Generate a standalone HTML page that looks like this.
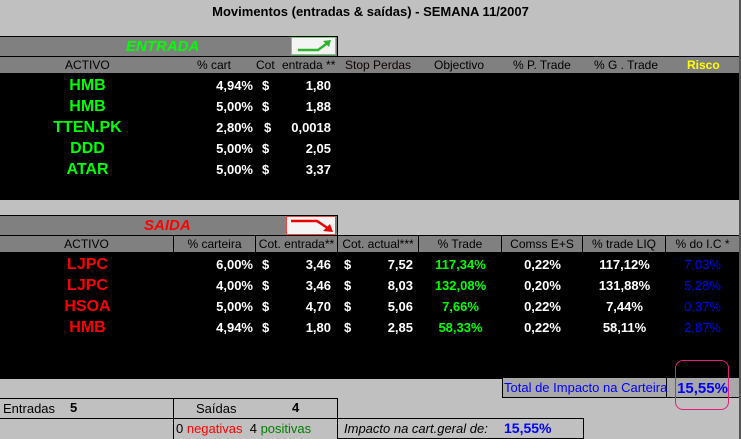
<!DOCTYPE html>
<html><head><meta charset="utf-8"><style>
*{margin:0;padding:0;box-sizing:border-box}
body{width:741px;height:439px;background:#c0c0c0;position:relative;overflow:hidden;font-family:"Liberation Sans",Arial,sans-serif;font-size:12px}
.a{position:absolute;white-space:nowrap}
.b{font-weight:bold}
.r{text-align:right}.c{text-align:center}
.w{color:#fff;font-weight:bold;font-size:13px}
.g{color:#00ff00;font-weight:bold;font-size:16px}
.rd{color:#ff0000;font-weight:bold;font-size:16px}
.hc{position:absolute;top:0;height:16px;border-right:1px solid #000;text-align:center;line-height:16px}
</style></head><body>
<div class="a b" style="left:0;width:741px;top:4px;text-align:center;font-size:13px;color:#000">Movimentos (entradas &amp; saídas) - SEMANA 11/2007</div>
<div class="a" style="right:0;top:0;width:2px;height:439px;background:#555"></div>

<div class="a" style="left:0;top:36px;width:338px;height:21px;background:#808080;border-top:1px solid #000;border-right:1px solid #000"></div>
<div class="a b" style="left:126px;top:38px;color:#00ff00;font-style:italic;font-size:15px">ENTRADA</div>
<div class="a" style="left:291px;top:37px;width:45px;height:18px;background:#f4f4f4;border:1px solid #7c7;">
<svg width="43" height="16"><path d="M6 12 H26 L37 4" stroke="#2db52d" stroke-width="2.5" fill="none"/><path d="M31 3 L39 2 L37 9 Z" fill="#2db52d"/></svg></div>
<div class="a" style="left:0;top:56px;width:739px;height:17px;background:#808080;border-top:1px solid #000"></div>
<div class="a" style="left:65px;top:58px">ACTIVO</div>
<div class="a" style="left:197px;top:58px">% cart</div>
<div class="a" style="left:256px;top:58px">Cot</div>
<div class="a" style="left:282px;top:58px">entrada **</div>
<div class="a" style="left:345px;top:58px;color:#100">Stop Perdas</div>
<div class="a" style="left:434px;top:58px">Objectivo</div>
<div class="a" style="left:513px;top:58px">% P. Trade</div>
<div class="a" style="left:594px;top:58px">% G . Trade</div>
<div class="a b" style="left:687px;top:58px;color:#ffff00">Risco</div>
<div class="a" style="left:0;top:73px;width:739px;height:127px;background:#000"></div>

<div class="a g c" style="left:30px;width:115px;top:77px">HMB</div>
<div class="a g c" style="left:30px;width:115px;top:98px">HMB</div>
<div class="a g c" style="left:30px;width:115px;top:119px">TTEN.PK</div>
<div class="a g c" style="left:30px;width:115px;top:140px">DDD</div>
<div class="a g c" style="left:30px;width:115px;top:161px">ATAR</div>
<div class="a w r" style="left:190px;width:63px;top:78px">4,94%</div>
<div class="a w r" style="left:190px;width:63px;top:99px">5,00%</div>
<div class="a w r" style="left:190px;width:63px;top:120px">2,80%</div>
<div class="a w r" style="left:190px;width:63px;top:141px">5,00%</div>
<div class="a w r" style="left:190px;width:63px;top:162px">5,00%</div>
<div class="a w" style="left:262px;top:78px">$</div>
<div class="a w" style="left:262px;top:99px">$</div>
<div class="a w" style="left:264px;top:120px">$</div>
<div class="a w" style="left:262px;top:141px">$</div>
<div class="a w" style="left:262px;top:162px">$</div>
<div class="a w r" style="left:270px;width:61px;top:78px">1,80</div>
<div class="a w r" style="left:270px;width:61px;top:99px">1,88</div>
<div class="a w r" style="left:270px;width:61px;top:120px">0,0018</div>
<div class="a w r" style="left:270px;width:61px;top:141px">2,05</div>
<div class="a w r" style="left:270px;width:61px;top:162px">3,37</div>

<div class="a" style="left:0;top:215px;width:338px;height:21px;background:#808080;border-top:1px solid #000;border-right:1px solid #000"></div>
<div class="a b" style="left:144px;top:217px;color:#ff0000;font-style:italic;font-size:15px">SAIDA</div>
<div class="a" style="left:286px;top:216px;width:50px;height:19px;background:#f4f4f4;border:1px solid #e44;">
<svg width="48" height="17"><path d="M4 4 H30 L42 12" stroke="#e00" stroke-width="2.5" fill="none"/><path d="M36 14 L46 15 L43 7 Z" fill="#e00"/></svg></div>
<div class="a" style="left:0;top:235px;width:739px;height:18px;background:#808080;border-top:1px solid #000;border-bottom:1px solid #000">
<div class="hc" style="left:0;width:174px">ACTIVO</div>
<div class="hc" style="left:174px;width:82px">% carteira</div>
<div class="hc" style="left:256px;width:82px">Cot. entrada**</div>
<div class="hc" style="left:338px;width:81px">Cot. actual***</div>
<div class="hc" style="left:419px;width:83px">% Trade</div>
<div class="hc" style="left:502px;width:81px">Comss E+S</div>
<div class="hc" style="left:583px;width:83px">% trade LIQ</div>
<div class="hc" style="left:666px;width:73px;border:none">% do I.C *</div>
</div>
<div class="a" style="left:0;top:253px;width:739px;height:126px;background:#000"></div>

<div class="a rd c" style="left:30px;width:115px;top:256px">LJPC</div>
<div class="a rd c" style="left:30px;width:115px;top:277px">LJPC</div>
<div class="a rd c" style="left:30px;width:115px;top:298px">HSOA</div>
<div class="a rd c" style="left:30px;width:115px;top:319px">HMB</div>
<div class="a w r" style="left:190px;width:63px;top:257px">6,00%</div>
<div class="a w r" style="left:190px;width:63px;top:278px">4,00%</div>
<div class="a w r" style="left:190px;width:63px;top:299px">5,00%</div>
<div class="a w r" style="left:190px;width:63px;top:320px">4,94%</div>
<div class="a w" style="left:262px;top:257px">$</div><div class="a w" style="left:262px;top:278px">$</div><div class="a w" style="left:262px;top:299px">$</div><div class="a w" style="left:262px;top:320px">$</div>
<div class="a w r" style="left:270px;width:61px;top:257px">3,46</div>
<div class="a w r" style="left:270px;width:61px;top:278px">3,46</div>
<div class="a w r" style="left:270px;width:61px;top:299px">4,70</div>
<div class="a w r" style="left:270px;width:61px;top:320px">1,80</div>
<div class="a w" style="left:344px;top:257px">$</div><div class="a w" style="left:344px;top:278px">$</div><div class="a w" style="left:344px;top:299px">$</div><div class="a w" style="left:344px;top:320px">$</div>
<div class="a w r" style="left:350px;width:63px;top:257px">7,52</div>
<div class="a w r" style="left:350px;width:63px;top:278px">8,03</div>
<div class="a w r" style="left:350px;width:63px;top:299px">5,06</div>
<div class="a w r" style="left:350px;width:63px;top:320px">2,85</div>
<div class="a w c" style="left:419px;width:83px;top:257px;color:#00ff00">117,34%</div>
<div class="a w c" style="left:419px;width:83px;top:278px;color:#00ff00">132,08%</div>
<div class="a w c" style="left:419px;width:83px;top:299px;color:#00ff00">7,66%</div>
<div class="a w c" style="left:419px;width:83px;top:320px;color:#00ff00">58,33%</div>
<div class="a w c" style="left:502px;width:81px;top:257px">0,22%</div>
<div class="a w c" style="left:502px;width:81px;top:278px">0,20%</div>
<div class="a w c" style="left:502px;width:81px;top:299px">0,22%</div>
<div class="a w c" style="left:502px;width:81px;top:320px">0,22%</div>
<div class="a w c" style="left:583px;width:83px;top:257px">117,12%</div>
<div class="a w c" style="left:583px;width:83px;top:278px">131,88%</div>
<div class="a w c" style="left:583px;width:83px;top:299px">7,44%</div>
<div class="a w c" style="left:583px;width:83px;top:320px">58,11%</div>
<div class="a c" style="left:666px;width:73px;top:257px;color:#0000ff;font-size:13px">7,03%</div>
<div class="a c" style="left:666px;width:73px;top:278px;color:#0000ff;font-size:13px">5,28%</div>
<div class="a c" style="left:666px;width:73px;top:299px;color:#0000ff;font-size:13px">0,37%</div>
<div class="a c" style="left:666px;width:73px;top:320px;color:#0000ff;font-size:13px">2,87%</div>

<div class="a" style="left:502px;top:378px;width:237px;height:20px;background:#a8a8a8;border-bottom:1px solid #000;border-left:1px solid #000"></div>
<div class="a" style="left:666px;top:378px;width:1px;height:20px;background:#000"></div>
<div class="a" style="left:504px;top:380px;color:#0000ff;font-size:13px">Total de Impacto na Carteira</div>
<div class="a b" style="left:666px;width:73px;top:380px;text-align:center;color:#0000ff;font-size:15px">15,55%</div>
<div class="a" style="left:675px;top:360px;width:54px;height:50px;border:1px solid #e0207a;border-radius:8px"></div>

<div class="a" style="left:0;top:398px;width:337px;height:21px;border-top:1px solid #000;border-bottom:1px solid #000"></div>
<div class="a" style="left:173px;top:398px;width:1px;height:41px;background:#000"></div>
<div class="a" style="left:337px;top:398px;width:1px;height:41px;background:#000"></div>
<div class="a" style="left:3px;top:401px;font-size:13px">Entradas</div>
<div class="a b" style="left:70px;top:400px;font-size:13px">5</div>
<div class="a" style="left:196px;top:401px;font-size:13px">Saídas</div>
<div class="a b" style="left:292px;top:400px;font-size:13px">4</div>
<div class="a" style="left:176px;top:421px;font-size:13px">0 <span style="color:#ff0000">negativas</span>&nbsp; 4 <span style="color:#008000">positivas</span></div>
<div class="a" style="left:337px;top:418px;width:247px;height:21px;border:1px solid #000"></div>
<div class="a" style="left:344px;top:421px;font-size:13px;font-style:italic">Impacto na cart.geral de:</div>
<div class="a b" style="left:504px;top:420px;font-size:14px;color:#0000ff">15,55%</div>
</body></html>
